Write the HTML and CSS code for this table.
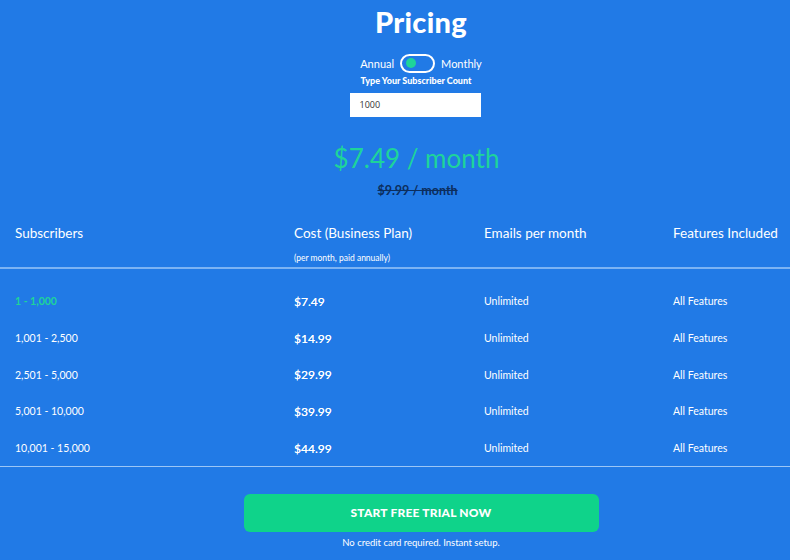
FILE: index.html
```html
<!DOCTYPE html>
<html>
<head>
<meta charset="utf-8">
<link rel="stylesheet" href="styles.css">
</head>
<body>
<div class="page">
  <section class="top">
    <h1 class="title">Pricing</h1>
    <div class="toggle-row">
      <span>Annual</span>
      <span class="switch"><span class="knob"></span></span>
      <span>Monthly</span>
    </div>
    <div class="label">Type Your Subscriber Count</div>
    <div class="input">1000</div>
    <div class="price">$7.49 / month</div>
    <div class="old-price">$9.99 / month</div>
  </section>

  <section class="table">
    <div class="thead">
      <div class="th">Subscribers</div>
      <div class="th">Cost (Business Plan)<div class="sub">(per month, paid annually)</div></div>
      <div class="th">Emails per month</div>
      <div class="th">Features Included</div>
    </div>
    <div class="tbody">
      <div class="tr active">
        <div class="td range">1 - 1,000</div><div class="td cost">$7.49</div><div class="td">Unlimited</div><div class="td">All Features</div>
      </div>
      <div class="tr">
        <div class="td range">1,001 - 2,500</div><div class="td cost">$14.99</div><div class="td">Unlimited</div><div class="td">All Features</div>
      </div>
      <div class="tr">
        <div class="td range">2,501 - 5,000</div><div class="td cost">$29.99</div><div class="td">Unlimited</div><div class="td">All Features</div>
      </div>
      <div class="tr">
        <div class="td range">5,001 - 10,000</div><div class="td cost">$39.99</div><div class="td">Unlimited</div><div class="td">All Features</div>
      </div>
      <div class="tr">
        <div class="td range">10,001 - 15,000</div><div class="td cost">$44.99</div><div class="td">Unlimited</div><div class="td">All Features</div>
      </div>
    </div>
  </section>

  <section class="cta">
    <div class="btn">START FREE TRIAL NOW</div>
    <div class="note">No credit card required. Instant setup.</div>
  </section>
</div>
</body>
</html>
```

FILE: styles.css
```css
html, body {
  margin: 0;
  padding: 0;
  background: #217ae6;
}
body {
  font-family: "Lato", "Open Sans", sans-serif;
  color: #ffffff;
  width: 790px;
  height: 560px;
  overflow: hidden;
}
.page {
  display: flex;
  flex-direction: column;
}
.top {
  display: flex;
  flex-direction: column;
  align-items: center;
  padding-left: 48px;
  padding-top: 4px;
}
.title {
  margin: 0;
  font-size: 29px;
  font-weight: 900;
  line-height: 36px;
  letter-spacing: 0.3px;
  margin-left: 4px;
}
.toggle-row {
  display: flex;
  align-items: center;
  gap: 6px;
  font-size: 11px;
  margin-top: 13px;
  height: 20px;
  margin-left: 4px;
}
.switch {
  height: 15px;
  border: 2px solid #ffffff;
  border-radius: 10px;
  display: flex;
  align-items: center;
  padding-left: 4px;
  box-sizing: content-box;
  width: 27px;
}
.knob {
  width: 10px;
  height: 10px;
  border-radius: 50%;
  background: #1ed49a;
}
.label {
  font-size: 9px;
  font-weight: 900;
  margin-top: 1px;
  line-height: 14px;
  margin-left: -6px;
}
.input {
  width: 121px;
  height: 24px;
  background: #ffffff;
  color: #333333;
  font-size: 9px;
  line-height: 24px;
  padding-left: 10px;
  margin-top: 5px;
  margin-left: -8px;
  font-family: "Open Sans", sans-serif;
}
.price {
  color: #1ed49a;
  font-size: 26px;
  font-weight: 400;
  margin-top: 25px;
  line-height: 32px;
  margin-left: -5px;
}
.old-price {
  color: #0c2e5e;
  font-size: 12.5px;
  font-weight: 700;
  text-decoration: line-through;
  margin-top: 7px;
  line-height: 20px;
  margin-left: -3px;
}
.table {
  margin-top: 16px;
}
.thead {
  display: grid;
  grid-template-columns: 279px 190px 189px 1fr;
  padding-left: 15px;
  height: 50px;
  border-bottom: 2px solid #7cb3f3;
  white-space: nowrap;
}
.th {
  font-size: 13.5px;
  line-height: 18px;
  padding-top: 7px;
}
.sub {
  font-size: 8.5px;
  line-height: 12px;
  margin-top: 10px;
}
.tbody {
  padding-top: 14px;
  padding-bottom: 0;
  border-bottom: 1px solid #9cc6f6;
}
.tr {
  display: grid;
  grid-template-columns: 279px 190px 189px 1fr;
  padding-left: 15px;
  height: 36.7px;
  align-items: center;
  font-size: 10.5px;
}
.tr .cost {
  font-size: 12px;
  font-weight: 400;
  text-shadow: 0 0 0.4px #ffffff;
}
.tr.active .range {
  color: #1ed49a;
  font-weight: 700;
}
.cta {
  display: flex;
  flex-direction: column;
  align-items: center;
  padding-left: 52px;
  padding-top: 27px;
}
.btn {
  width: 355px;
  height: 38px;
  background: #0fd38a;
  border-radius: 6px;
  font-size: 12px;
  font-weight: 900;
  line-height: 38px;
  text-align: center;
  letter-spacing: 0.2px;
}
.note {
  font-size: 9.5px;
  margin-top: 5px;
  line-height: 12px;
}
```
